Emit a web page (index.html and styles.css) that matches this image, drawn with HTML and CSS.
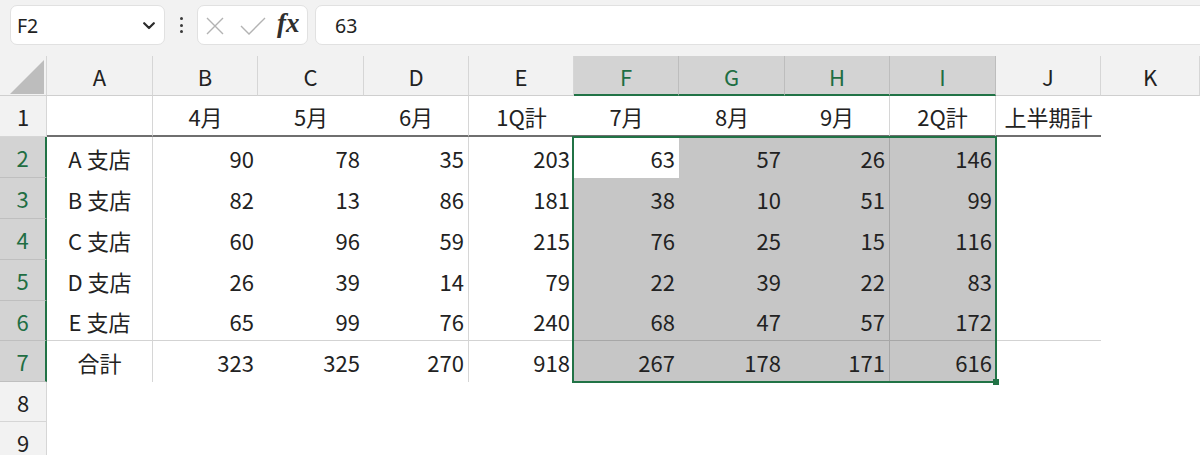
FILE: index.html
```html
<!DOCTYPE html>
<html lang="ja">
<head>
<meta charset="utf-8">
<title>Sheet</title>
<link rel="stylesheet" href="styles.css">
</head>
<body>
<div class="topbar">
  <div class="namebox">
    <span class="nb-text">F2</span>
    <svg class="chev" width="12" height="8" viewBox="0 0 12 8"><path d="M1.2 1.2 L6 6 L10.8 1.2" fill="none" stroke="#2b2b2b" stroke-width="2.2" stroke-linecap="round" stroke-linejoin="round"/></svg>
  </div>
  <div class="dots"><i></i><i></i><i></i></div>
  <div class="fxbox">
    <svg class="ico-x" width="18" height="18" viewBox="0 0 18 18"><path d="M1 1 L17 17 M17 1 L1 17" stroke="#b3b3b3" stroke-width="1.4" fill="none"/></svg>
    <svg class="ico-check" width="26" height="18" viewBox="0 0 26 18"><path d="M1 9 L9 17 L25 1" stroke="#b3b3b3" stroke-width="1.4" fill="none"/></svg>
    <span class="fx">fx</span>
  </div>
  <div class="formula">63</div>
</div>

<div class="sheet">
  <div class="corner"><svg width="47" height="40" viewBox="0 0 47 40"><polygon points="44,4 44,38 10,38" fill="#bdbdbd"/></svg></div>
  <div class="ch">A</div><div class="ch">B</div><div class="ch">C</div><div class="ch">D</div><div class="ch">E</div>
  <div class="ch sel">F</div><div class="ch sel">G</div><div class="ch sel">H</div><div class="ch sel">I</div>
  <div class="ch">J</div><div class="ch">K</div>

  <!-- row 1 -->
  <div class="rh">1</div>
  <div class="c hd vr"></div>
  <div class="c hd">4月</div>
  <div class="c hd">5月</div>
  <div class="c hd vr">6月</div>
  <div class="c hd">1Q計</div>
  <div class="c hd">7月</div>
  <div class="c hd">8月</div>
  <div class="c hd vr">9月</div>
  <div class="c hd vr">2Q計</div>
  <div class="c hd">上半期計</div>
  <div class="c"></div>

  <!-- row 2 -->
  <div class="rh sel">2</div>
  <div class="c lb vr">A 支店</div>
  <div class="c n">90</div><div class="c n">78</div><div class="c n vr">35</div><div class="c n">203</div>
  <div class="c n act">63</div><div class="c n s">57</div><div class="c n s svr">26</div><div class="c n s">146</div>
  <div class="c"></div><div class="c"></div>

  <!-- row 3 -->
  <div class="rh sel">3</div>
  <div class="c lb vr">B 支店</div>
  <div class="c n">82</div><div class="c n">13</div><div class="c n vr">86</div><div class="c n">181</div>
  <div class="c n s">38</div><div class="c n s">10</div><div class="c n s svr">51</div><div class="c n s">99</div>
  <div class="c"></div><div class="c"></div>

  <!-- row 4 -->
  <div class="rh sel">4</div>
  <div class="c lb vr">C 支店</div>
  <div class="c n">60</div><div class="c n">96</div><div class="c n vr">59</div><div class="c n">215</div>
  <div class="c n s">76</div><div class="c n s">25</div><div class="c n s svr">15</div><div class="c n s">116</div>
  <div class="c"></div><div class="c"></div>

  <!-- row 5 -->
  <div class="rh sel">5</div>
  <div class="c lb vr">D 支店</div>
  <div class="c n">26</div><div class="c n">39</div><div class="c n vr">14</div><div class="c n">79</div>
  <div class="c n s">22</div><div class="c n s">39</div><div class="c n s svr">22</div><div class="c n s">83</div>
  <div class="c"></div><div class="c"></div>

  <!-- row 6 -->
  <div class="rh sel">6</div>
  <div class="c lb vr bt">E 支店</div>
  <div class="c n bt">65</div><div class="c n bt">99</div><div class="c n vr bt">76</div><div class="c n bt">240</div>
  <div class="c n s sbt">68</div><div class="c n s sbt">47</div><div class="c n s svr sbt">57</div><div class="c n s sbt">172</div>
  <div class="c bt"></div><div class="c"></div>

  <!-- row 7 -->
  <div class="rh sel">7</div>
  <div class="c lb vr">合計</div>
  <div class="c n">323</div><div class="c n">325</div><div class="c n vr">270</div><div class="c n">918</div>
  <div class="c n s">267</div><div class="c n s">178</div><div class="c n s svr">171</div><div class="c n s">616</div>
  <div class="c"></div><div class="c"></div>

  <!-- row 8 -->
  <div class="rh">8</div>
  <div class="c"></div><div class="c"></div><div class="c"></div><div class="c"></div><div class="c"></div>
  <div class="c"></div><div class="c"></div><div class="c"></div><div class="c"></div><div class="c"></div><div class="c"></div>

  <!-- row 9 -->
  <div class="rh">9</div>
  <div class="c"></div><div class="c"></div><div class="c"></div><div class="c"></div><div class="c"></div>
  <div class="c"></div><div class="c"></div><div class="c"></div><div class="c"></div><div class="c"></div><div class="c"></div>

  <div class="selection"><span class="handle"></span></div>
</div>
</body>
</html>
```

FILE: styles.css
```css
* { box-sizing: border-box; }

html, body {
  margin: 0;
  padding: 0;
  background: #ffffff;
  overflow: hidden;
}

body {
  width: 1200px;
  height: 455px;
  font-family: "Noto Sans CJK JP", "Noto Sans", sans-serif;
  color: #222222;
}

/* ---------- formula bar ---------- */
.topbar {
  height: 56px;
  background: #f2f2f2;
  display: flex;
  align-items: flex-start;
  padding: 5px 0 0 10px;
}

.namebox {
  width: 155px;
  height: 40px;
  background: #ffffff;
  border: 1px solid #e1e1e1;
  border-radius: 7px;
  display: flex;
  align-items: center;
  justify-content: space-between;
  padding: 0 9px 0 6px;
}

.nb-text {
  font-family: "Noto Sans", sans-serif;
  font-size: 19.5px;
  color: #222;
}

.chev { display: block; margin-top: 1px; }

.dots {
  width: 32px;
  height: 40px;
  display: flex;
  flex-direction: column;
  align-items: center;
  justify-content: center;
  gap: 3.5px;
}

.dots i {
  display: block;
  width: 3px;
  height: 3px;
  border-radius: 50%;
  background: #3a3a3a;
}

.fxbox {
  width: 111px;
  height: 40px;
  background: #ffffff;
  border: 1px solid #e1e1e1;
  border-radius: 7px;
  display: flex;
  align-items: center;
  padding-left: 8px;
}

.ico-x { display: block; margin-top: 1px; }
.ico-check { display: block; margin-left: 16px; margin-top: 1px; }

.fx {
  margin-left: 11px;
  font-family: "Liberation Serif", serif;
  font-style: italic;
  font-weight: bold;
  font-size: 27px;
  color: #2f2f2f;
  line-height: 1;
  margin-top: -3px;
}

.formula {
  flex: 1;
  height: 40px;
  margin-left: 7px;
  margin-right: -12px;
  background: #ffffff;
  border: 1px solid #e1e1e1;
  border-radius: 7px;
  display: flex;
  align-items: center;
  padding-left: 19px;
  font-family: "Noto Sans", sans-serif;
  font-size: 19.5px;
  color: #222;
}

/* ---------- sheet grid ---------- */
.sheet {
  display: grid;
  grid-template-columns: 47px 106px 105px 106px 105px 105px 105px 106px 105px 106px 105px 1fr;
  grid-template-rows: 40px 41px 41px 41px 41px 41px 40px 41px 40px 41px;
  position: relative;
  font-size: 22px;
  line-height: 1;
}

.corner {
  background: #f2f2f2;
  border-right: 1px solid #d6d6d6;
  border-bottom: 1px solid #cfcfcf;
}
.corner svg { display: block; }

.ch {
  background: #f2f2f2;
  border-right: 1px solid #d6d6d6;
  border-bottom: 1px solid #cfcfcf;
  display: flex;
  align-items: center;
  justify-content: center;
  padding-top: 1px;
}

.ch.sel {
  background: #d3d3d3;
  color: #1f6e43;
  border-right-color: #bdbdbd;
  border-bottom: 2px solid #217346;
}

.rh {
  background: #f2f2f2;
  border-right: 1px solid #d6d6d6;
  border-bottom: 1px solid #d6d6d6;
  display: flex;
  align-items: center;
  justify-content: center;
}

.rh.sel {
  background: #d3d3d3;
  color: #1f6e43;
  border-right: 2px solid #217346;
  border-bottom-color: #bfbfbf;
}

.c {
  background: #ffffff;
  display: flex;
  align-items: center;
  padding: 0 4px;
  white-space: nowrap;
}

.hd {
  justify-content: center;
  border-bottom: 2px solid #6f6f6f;
}

.lb { justify-content: center; }
.n { justify-content: flex-end; }

.vr { border-right: 1px solid #d6d6d6; }
.bt { border-bottom: 1px solid #d3d3d3; }

.s { background: #c6c6c6; }
.svr { border-right: 1px solid #a7a7a7; }
.sbt { border-bottom: 1px solid #a7a7a7; }

.act { background: #ffffff; }

/* selection outline: overlay placed on the F2:I7 grid area */
.selection {
  position: absolute;
  grid-column: 7 / 11;
  grid-row: 3 / 9;
  top: -1px;
  left: -2px;
  right: -1px;
  bottom: -1px;
  border: 2px solid #217346;
  pointer-events: none;
}

.handle {
  position: absolute;
  right: -4px;
  bottom: -4px;
  width: 6px;
  height: 6px;
  background: #217346;
}
```
